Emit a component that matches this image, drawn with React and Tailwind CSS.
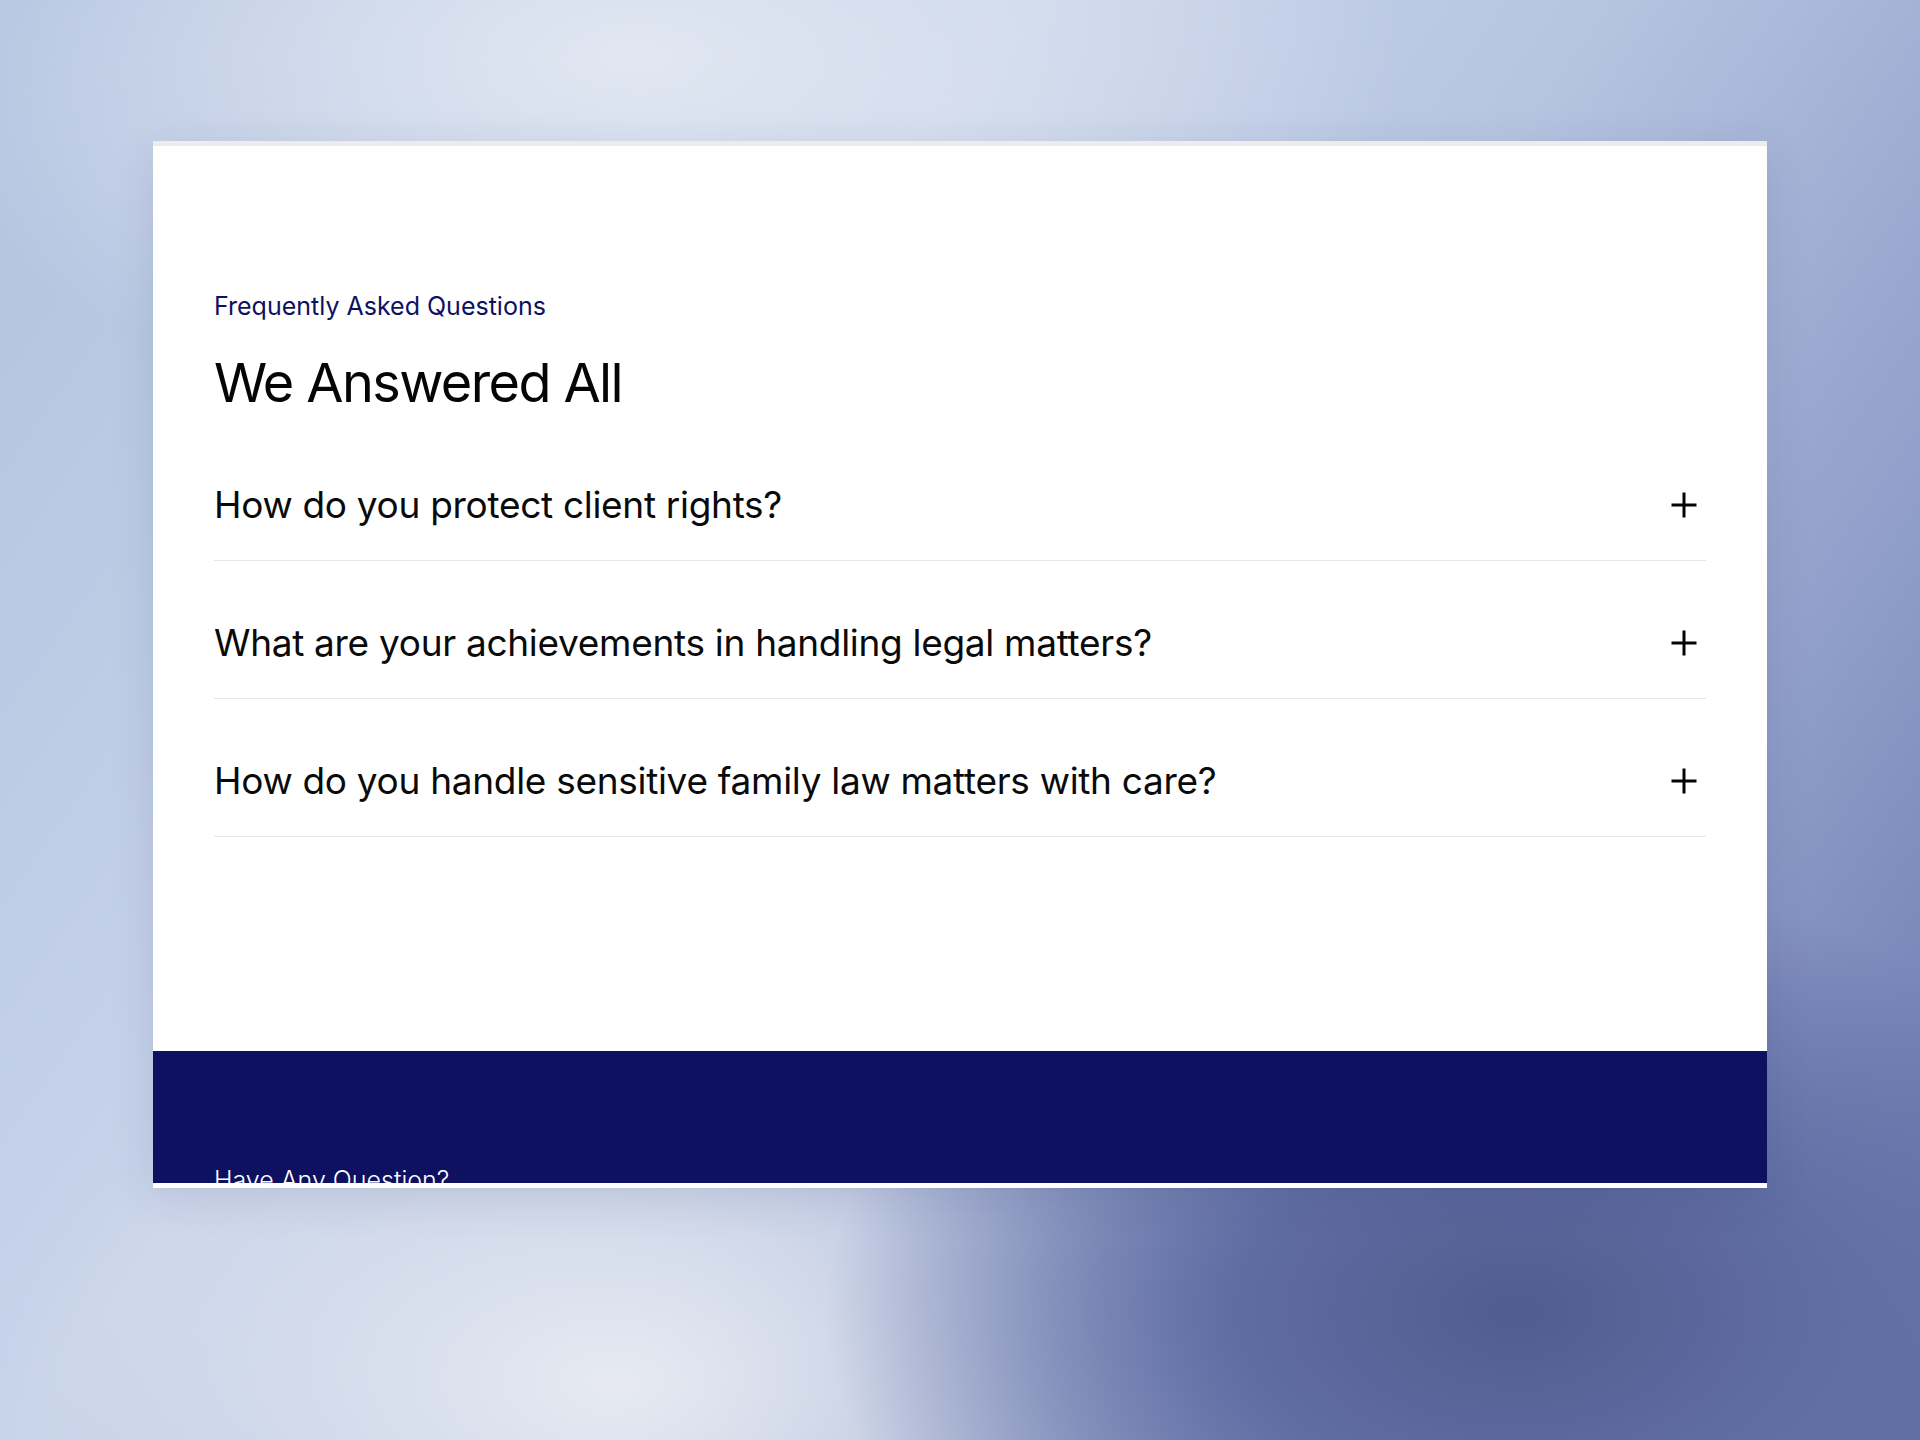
import { useState } from 'react';

const faqs = [
  'How do you protect client rights?',
  'What are your achievements in handling legal matters?',
  'How do you handle sensitive family law matters with care?',
];

const PlusIcon = () => (
  <svg width="26" height="26" viewBox="0 0 26 26" fill="none" stroke="#050505" strokeWidth="3" strokeLinecap="butt">
    <path d="M13 0.5v25M0.5 13h25" />
  </svg>
);

const App = () => {
  const [open, setOpen] = useState(null);

  return (
    <div
      className="w-full h-[1440px] overflow-hidden pt-[141px] bg-[radial-gradient(ellipse_36%_30%_at_79%_91%,#525b8f_0%,#5f6ca2_40%,transparent_100%),radial-gradient(ellipse_32%_26%_at_32%_96%,#e7eaf1_0%,transparent_100%),radial-gradient(ellipse_40%_25%_at_33%_4%,#e1e7f2_0%,transparent_100%),linear-gradient(125deg,#b0c1df_0%,#c8d4ea_35%,#b6c4e1_55%,#8f9dc9_78%,#6674ab_100%)]"
      style={{ fontFamily: 'Inter, "Noto Sans", sans-serif' }}
    >
      <div className="mx-auto w-[1614px] h-[1047px] overflow-hidden bg-white border-t-[5px] border-[#ececec] shadow-[0_10px_40px_rgba(40,50,100,0.12)]">
        {/* FAQ */}
        <section className="px-[61px] pt-[144px] h-[905px]">
          <p className="text-[25px] leading-[32px] text-[#0e1160]">Frequently Asked Questions</p>
          <h2 className="mt-[25px] text-[54px] leading-[72px] text-[#050505] tracking-[-1.6px]">We Answered All</h2>

          <div className="mt-[4px]">
            {faqs.map((q, i) => (
              <button
                key={q}
                onClick={() => setOpen(open === i ? null : i)}
                className="w-full flex items-center justify-between pt-[60px] pb-[33px] border-b border-[#e3e6ec] text-left"
              >
                <span className="text-[37px] leading-[44px] text-[#0a0a0a] tracking-[-0.3px]">{q}</span>
                <span className="w-[44px] flex justify-center">
                  <PlusIcon />
                </span>
              </button>
            ))}
          </div>
        </section>

        {/* Contact band */}
        <section className="bg-[#0e1160] h-[135px] px-[61px] pt-[113px] border-b-[3px] border-white">
          <p className="text-[25px] leading-[32px] text-white font-light">Have Any Question?</p>
        </section>
      </div>
    </div>
  );
};

export default App;
